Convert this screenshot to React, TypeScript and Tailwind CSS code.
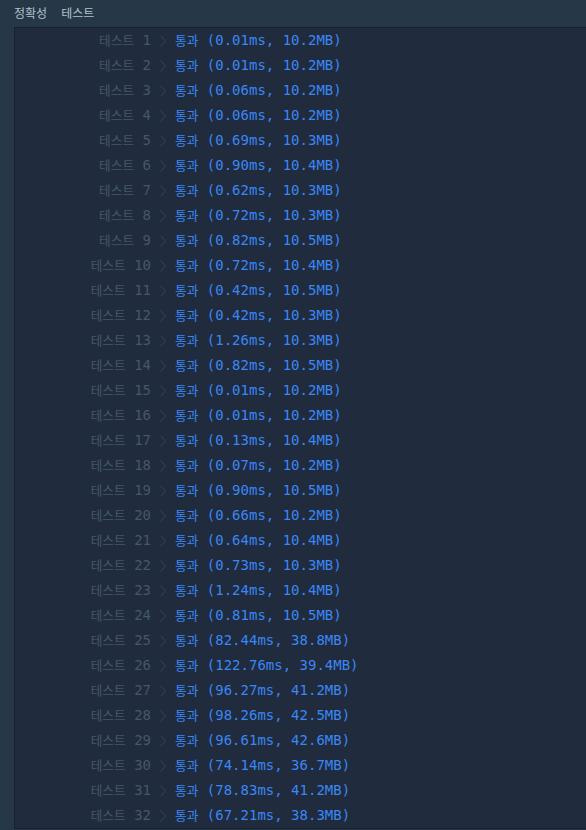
import React from "react";

const rows: [string, string][] = [
  ["0.01ms", "10.2MB"],
  ["0.01ms", "10.2MB"],
  ["0.06ms", "10.2MB"],
  ["0.06ms", "10.2MB"],
  ["0.69ms", "10.3MB"],
  ["0.90ms", "10.4MB"],
  ["0.62ms", "10.3MB"],
  ["0.72ms", "10.3MB"],
  ["0.82ms", "10.5MB"],
  ["0.72ms", "10.4MB"],
  ["0.42ms", "10.5MB"],
  ["0.42ms", "10.3MB"],
  ["1.26ms", "10.3MB"],
  ["0.82ms", "10.5MB"],
  ["0.01ms", "10.2MB"],
  ["0.01ms", "10.2MB"],
  ["0.13ms", "10.4MB"],
  ["0.07ms", "10.2MB"],
  ["0.90ms", "10.5MB"],
  ["0.66ms", "10.2MB"],
  ["0.64ms", "10.4MB"],
  ["0.73ms", "10.3MB"],
  ["1.24ms", "10.4MB"],
  ["0.81ms", "10.5MB"],
  ["82.44ms", "38.8MB"],
  ["122.76ms", "39.4MB"],
  ["96.27ms", "41.2MB"],
  ["98.26ms", "42.5MB"],
  ["96.61ms", "42.6MB"],
  ["74.14ms", "36.7MB"],
  ["78.83ms", "41.2MB"],
  ["67.21ms", "38.3MB"],
];

const mono = {
  fontFamily: '"DejaVu Sans Mono", "Noto Sans CJK KR", monospace',
};
const kr = {
  fontFamily: '"Noto Sans CJK KR", "Noto Sans", sans-serif',
};

export default function App() {
  return (
    <div className="w-[586px] h-[830px] bg-[#263747] overflow-hidden">
      <div
        className="h-[27px] flex items-center gap-[14px] pl-[14px] text-[12px] text-[#b2c0cc] pb-[1px]"
        style={kr}
      >
        <span>정확성</span>
        <span>테스트</span>
      </div>
      <div className="ml-[14px] h-[802px] bg-[#202b3d] border-l border-t border-b border-[#172030]">
        {rows.map(([t, m], i) => (
          <div
            key={i}
            className="h-[25px] flex items-center text-[14px]"
            style={mono}
          >
            <span className="w-[136px] text-right text-[#44576c] whitespace-pre">
              <span className="text-[12.7px]" style={kr}>
                테스트
              </span>{" "}
              {i + 1}
            </span>
            <svg
              width="6"
              height="12"
              viewBox="0 0 6 12"
              className="ml-[9px] mr-[9px]"
            >
              <polyline
                points="0.5,0.5 5.5,6 0.5,11.5"
                fill="none"
                stroke="#354659"
                strokeWidth="1"
              />
            </svg>
            <span className="text-[#3a87f5] whitespace-pre">
              <span className="text-[12.7px]" style={kr}>
                통과
              </span>{" "}
              ({t}, {m})
            </span>
          </div>
        ))}
      </div>
    </div>
  );
}
